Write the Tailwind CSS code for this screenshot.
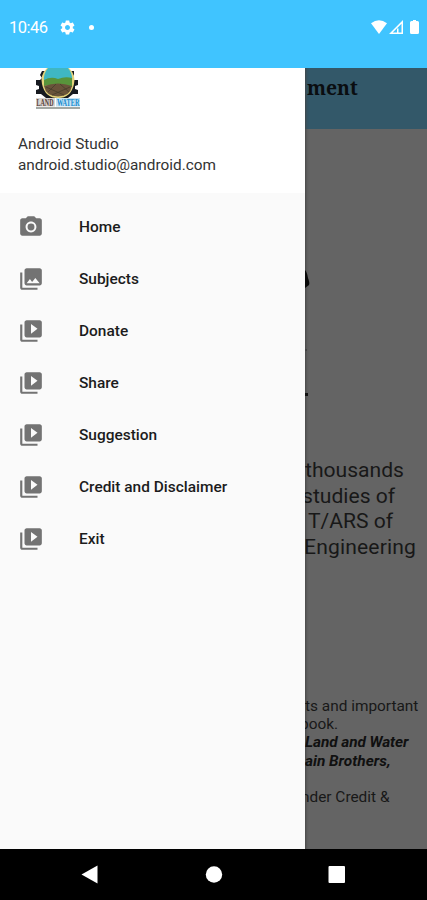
<!DOCTYPE html>
<html lang="en">
<head>
<meta charset="utf-8">
<title>Navigation drawer</title>
<script src="https://cdn.jsdelivr.net/npm/@tailwindcss/browser@4"></script>
</head>
<body class="w-[427px] h-[900px] overflow-hidden flex flex-col bg-black font-[Roboto,sans-serif]">
<svg class="hidden">
  <symbol id="video" viewBox="0 0 24 24"><path d="M4 6H2v14c0 1.1.9 2 2 2h14v-2H4V6zm16-4H8c-1.1 0-2 .9-2 2v12c0 1.1.9 2 2 2h12c1.1 0 2-.9 2-2V4c0-1.1-.9-2-2-2zm-8 12.500v-9l6 4.500-6 4.500z"/></symbol>
</svg>
<header class="h-[68px] shrink-0 bg-[#40c4ff] text-white flex items-start pt-[18px] pl-[9px] pr-[7px]">
  <span class="text-[16.500px] leading-[20px] w-[50px] whitespace-nowrap tracking-[-0.500px]">10:46</span>
  <svg class="w-[17px] h-[17px] mt-[1px]" viewBox="0 0 24 24" fill="currentColor"><path d="M19.430 12.980c.04-.32.07-.64.07-.98s-.03-.66-.07-.98l2.110-1.650c.19-.15.24-.42.12-.64l-2-3.460c-.12-.22-.39-.3-.61-.22l-2.490 1c-.52-.4-1.080-.73-1.690-.98l-.38-2.650C14.460 2.180 14.250 2 14 2h-4c-.25 0-.46.18-.49.42l-.38 2.650c-.61.25-1.170.59-1.690.98l-2.490-1c-.23-.09-.49 0-.61.22l-2 3.460c-.13.22-.07.49.12.64l2.110 1.650c-.04.32-.07.65-.07.98s.03.66.07.98l-2.110 1.650c-.19.15-.24.42-.12.64l2 3.460c.12.22.39.3.61.22l2.490-1c.52.4 1.080.73 1.690.98l.38 2.650c.03.24.24.42.49.42h4c.25 0 .46-.18.49-.42l.38-2.650c.61-.25 1.170-.59 1.690-.98l2.490 1c.23.09.49 0 .61-.22l2-3.460c.12-.22.07-.49-.12-.64l-2.110-1.650zM12 15.500c-1.930 0-3.500-1.570-3.500-3.500s1.570-3.500 3.500-3.500 3.500 1.570 3.500 3.500-1.570 3.500-3.500 3.500z"/></svg>
  <span class="w-[5px] h-[5px] rounded-full bg-white ml-[12.500px] mt-[6.500px]"></span>
  <svg class="w-[50px] h-[16px] ml-auto mt-[1px]" viewBox="0 0 50 16" fill="#fff"><path d="M1 4.300Q9 -1.800 17 4.300L9 15z"/><path fill-rule="evenodd" d="M33 1v14H19zM31.500 4.700L22.700 13.500H27V9.500h4.500zM28.500 9.500v4h3v-4z" /><path d="M41.500 2H43V1h3v1h1.500q1.500 0 1.500 1.500v10q0 1.500-1.500 1.500h-6q-1.500 0-1.500-1.500v-10q0-1.500 1.500-1.500z"/></svg>
</header>
<div class="h-[781px] shrink-0 flex">
  <aside class="w-[305px] shrink-0 bg-[#fafafa]">
    <div class="h-[125px] bg-white pl-[18px] overflow-hidden text-[#333]">
      <svg class="w-[44px] h-[42px] ml-[18px]" viewBox="0 0 44 42">
        <path fill="#171a20" d="M6 3l3 0-1 7 4 12q4 7 10 7t10-7l4-12-1-7h3l0 4-2 3 2 2h4v5l-3 1v3l3 1v4h-5l-5 4H10l-5-4H0v-4l3-1v-3l-3-1v-5h4l2-2-2-3z"/>
        <path fill="#e5d47c" d="M11 0Q4 7 6 16q3 14 16 14t16-14Q40 7 33 0z"/>
        <path fill="#3fb7c3" d="M12 0Q7 6 8 13h28Q37 6 32 0z"/>
        <path fill="#58943b" d="M8 12q7-4 14-1 7-3 14-1v9l-14-3-14 2z"/>
        <path fill="#69533a" d="M8 18q14-5 28 0-2 10.500-14 10.500T8 18z"/>
        <path d="M20 16l-8 8M24 16l9 8M10 19l18 8M34 19l-18 8" stroke="#453c29" stroke-width=".8"/>
        <rect y="30" width="19" height="8.500" fill="#d9d4d0"/>
        <rect x="20" y="30" width="24" height="8.500" fill="#c5e3f3"/>
        <text x="0.500" y="38" textLength="17" lengthAdjust="spacingAndGlyphs" font-family="Liberation Serif, serif" font-weight="700" font-size="10.500" fill="#55413b">LAND</text>
        <text x="21" y="38" textLength="22.500" lengthAdjust="spacingAndGlyphs" font-family="Liberation Serif, serif" font-weight="700" font-size="10.500" fill="#168bd0">WATER</text>
        <path d="M0 40h44" stroke="#858b86" stroke-width="1.600"/>
      </svg>
      <p class="mt-[24px] text-[15.350px] leading-[21px]">Android Studio</p>
      <p class="text-[15.350px] leading-[21px]">android.studio@android.com</p>
    </div>
    <nav class="pt-[8px] text-[15.450px] font-medium text-[#1c1c1c] [&>a]:flex [&>a]:items-center [&>a]:h-[52px] [&>a]:pl-[18px] [&>a]:gap-[35px] [&>a]:leading-[24px] [&_svg]:w-[26px] [&_svg]:h-[26px] [&_svg]:fill-[#737373]">
      <a><svg viewBox="0 0 24 24"><circle cx="12" cy="12" r="3.200"/><path d="M9 2L7.170 4H4c-1.100 0-2 .9-2 2v12c0 1.100.9 2 2 2h16c1.100 0 2-.9 2-2V6c0-1.100-.9-2-2-2h-3.170L15 2H9zm3 15c-2.760 0-5-2.240-5-5s2.240-5 5-5 5 2.240 5 5-2.240 5-5 5z"/></svg>Home</a>
      <a><svg viewBox="0 0 24 24"><path d="M22 16V4c0-1.100-.9-2-2-2H8c-1.100 0-2 .9-2 2v12c0 1.100.9 2 2 2h12c1.100 0 2-.9 2-2zm-11-4l2.030 2.710L16 11l4 5H8l3-4zM2 6v14c0 1.100.9 2 2 2h14v-2H4V6H2z"/></svg>Subjects</a>
      <a><svg><use href="#video"/></svg>Donate</a>
      <a><svg><use href="#video"/></svg>Share</a>
      <a><svg><use href="#video"/></svg>Suggestion</a>
      <a><svg><use href="#video"/></svg>Credit and Disclaimer</a>
      <a><svg><use href="#video"/></svg>Exit</a>
    </nav>
  </aside>
  <main class="w-[122px] shrink-0 overflow-hidden bg-[#646464] text-[#181818] whitespace-nowrap shadow-[inset_4px_0_3px_-3px_#444]">
    <div class="h-[61px] bg-[#335869] pt-[7px] pl-[2px] font-['Noto_Serif','DejaVu_Serif',serif] font-bold text-[19.300px] leading-[26px] text-[#0a0d10] shadow-[inset_4px_0_3px_-3px_#444]">ment</div>
    <svg class="w-[10px] h-[270px] block" viewBox="0 0 10 270"><path fill="#090909" d="M0 141q2 2 3 8 2 5 1 7l-4 3z"/><path fill="#444" d="M0 220h2v2H0z"/><path fill="#111" d="M0 264h3v3H0z"/></svg>
    <div class="mt-[58px] text-[21.100px] leading-[25.500px]">
      <p>thousands</p><p class="-ml-[3px]">studies of</p><p class="ml-[3px]">T/ARS of</p><p class="-ml-[1px] tracking-[0.150px]">Engineering</p>
    </div>
    <div class="mt-[138px] text-[15.400px] leading-[18.200px]">
      <p>ts and important</p><p class="-ml-[5px]">book.</p>
      <p class="font-bold italic text-[#101010] tracking-[-0.080px]">Land and Water</p><p class="font-bold italic text-[#101010]">ain Brothers,</p>
      <p class="mt-[18px] -ml-[4px]">nder Credit &amp;</p>
    </div>
  </main>
</div>
<footer class="h-[51px] shrink-0 bg-black">
  <svg class="w-[427px] h-[51px]" viewBox="0 0 427 51" fill="#fff"><path d="M81.500 25.500L97.500 16.500v18z"/><circle cx="214" cy="25.500" r="8.200"/><rect x="328.500" y="17" width="16.500" height="17" rx="1"/></svg>
</footer>
</body>
</html>
